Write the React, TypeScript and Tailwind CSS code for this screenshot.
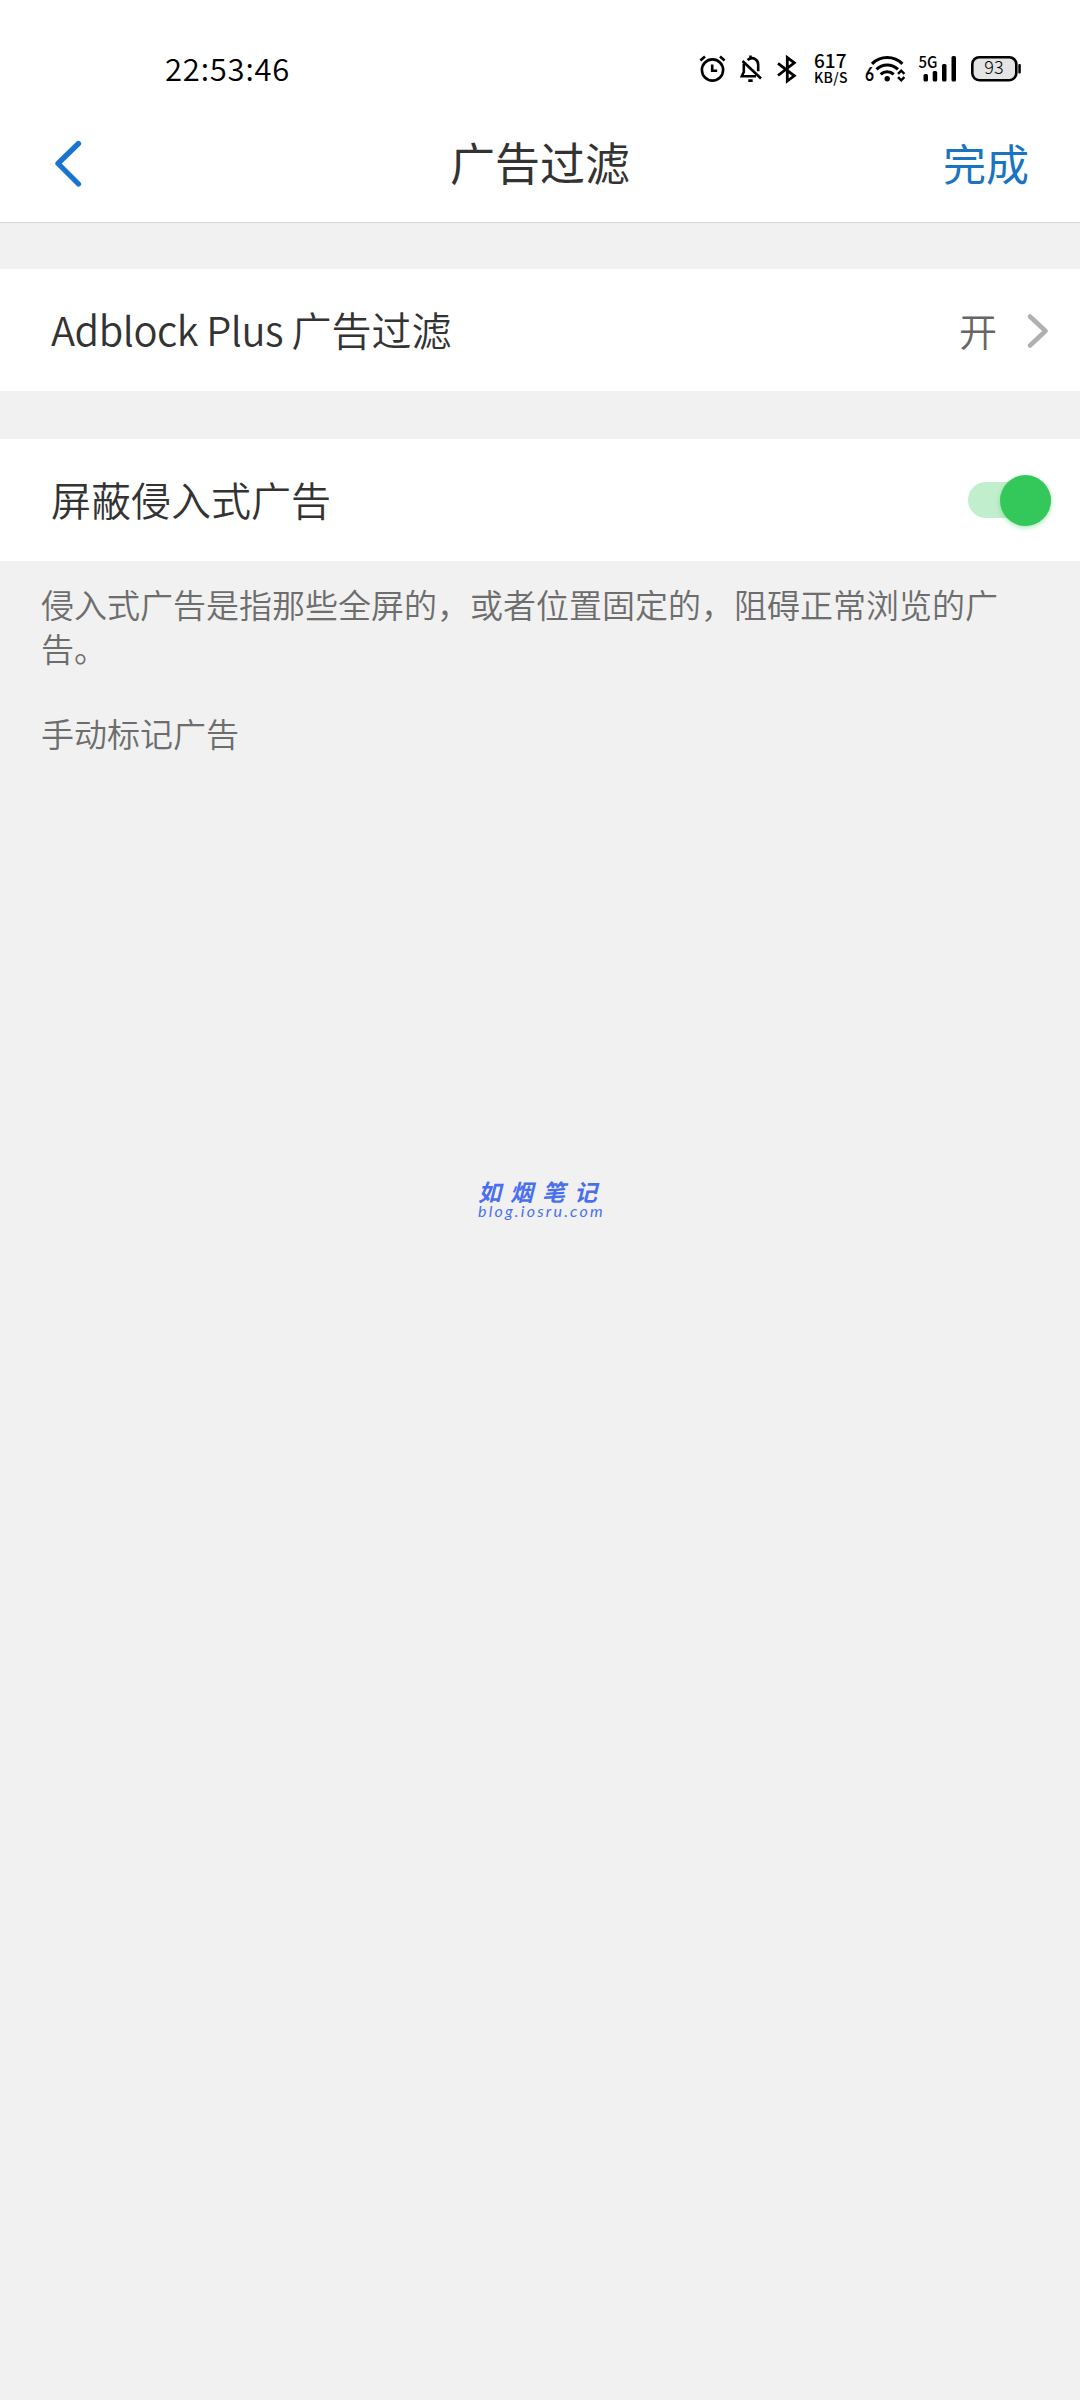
import type { ReactNode } from "react";

function StatusBar() {
  return (
    <div className="flex h-[106px] items-start pt-[53px] pl-[165px] text-black">
      <span className="-mt-px w-[533px] text-[31px] leading-8 font-[350] tracking-[0.8px] whitespace-nowrap">22:53:46</span>

      {/* alarm */}
      <svg className="h-8 w-[42px] shrink-0" viewBox="0 0 42 32" fill="none" stroke="currentColor" strokeWidth="2.6">
        <circle cx="14.5" cy="17" r="10.6" />
        <path d="M14.2 11.5v6.3h5M2.4 7.4l4.6-4M22 3.4l4.6 4" />
      </svg>

      {/* muted bell */}
      <svg className="h-8 w-[36px] shrink-0" viewBox="0 0 36 32" fill="none" stroke="currentColor" strokeWidth="2.6">
        <path d="M2.5 8l18.500 17.500" />
        <path d="M7.500 7c5.200-4.200 10.700-.6 10.700 4.800v6.400M3.800 10.500v8.500L1.800 23.300h14.200" />
        <path d="M8.300 27.600h4.400M10.500 2.500v3" />
      </svg>

      {/* bluetooth */}
      <svg className="h-8 w-[38px] shrink-0" viewBox="0 0 38 32" fill="none" stroke="currentColor" strokeWidth="2.8">
        <path d="M2 10.400l16.300 12.400-7 5.200V4.500l7 5.300L2 22.500" />
      </svg>

      <div className="-mt-[2px] flex w-[51px] shrink-0 flex-col font-medium">
        <span className="text-[19px] leading-[18px]">617</span>
        <span className="text-[14px] leading-4 tracking-[0.3px]">KB/S</span>
      </div>

      {/* wifi 6 */}
      <svg className="h-8 w-[53px] shrink-0 overflow-visible" viewBox="0 0 53 32" fill="none" stroke="currentColor" strokeWidth="3.2">
        <path d="M7 10.800a21.500 21.500 0 0 1 30.400 0M11.500 16.300a15.500 15.500 0 0 1 21.400 0M15.700 21.300a9.500 9.500 0 0 1 13 0" />
        <circle cx="22.200" cy="25.800" r="2.700" fill="currentColor" stroke="none" />
        <path d="M33 20.800l3.200-3.200 3.200 3.200M33 24.200l3.200 3.200 3.200-3.200" strokeWidth="2.400" />
        <text x="0" y="28.300" className="font-[Lato] text-[19px] font-bold" textLength="9" lengthAdjust="spacingAndGlyphs" fill="currentColor" stroke="none">6</text>
      </svg>

      {/* 5G signal */}
      <svg className="h-8 w-[53px] shrink-0 overflow-visible" viewBox="0 0 53 32" fill="currentColor">
        <text x="0.500" y="15" className="text-[16px] font-medium" textLength="19" lengthAdjust="spacingAndGlyphs">5G</text>
        <rect x="5.500" y="21" width="4.500" height="7.500" rx="1.500" />
        <rect x="14.700" y="18" width="4.500" height="10.500" rx="1.500" />
        <rect x="24" y="11" width="4.500" height="17.500" rx="1.500" />
        <rect x="33.500" y="3" width="4.500" height="25.500" rx="1.500" />
      </svg>

      {/* battery */}
      <svg className="h-8 w-[52px] shrink-0" viewBox="0 0 52 32">
        <rect x="1.300" y="4.200" width="44" height="23" rx="7" fill="#e4e4e4" stroke="currentColor" strokeWidth="2.600" />
        <rect x="47.300" y="11" width="2.500" height="9.500" rx="1" />
        <text x="23" y="21" textAnchor="middle" className="text-[18px] font-light">93</text>
      </svg>
    </div>
  );
}

function Header() {
  return (
    <div className="grid h-[117px] grid-cols-3 items-center border-b border-[#d6d6d6] px-[51px]">
      <svg className="ml-[3px] h-12 w-7" viewBox="0 0 28 48" fill="none" stroke="#1874d0" strokeWidth="5.300" strokeLinecap="round" strokeLinejoin="round">
        <path d="M24.500 3.500L4 23.500l20.500 20.500" />
      </svg>
      <h1 className="pb-[5px] text-center text-[45px] leading-none text-[#333]">广告过滤</h1>
      <button className="pb-[4px] text-right text-[43px] leading-none text-[#1a74bf]">完成</button>
    </div>
  );
}

function Row({ label, children }: { label: ReactNode; children: ReactNode }) {
  return (
    <div className="flex h-[122px] items-center justify-between bg-white pl-[51px] text-[40px] leading-none font-[350] text-[#333]">
      <span className="pb-[2px]">{label}</span>
      {children}
    </div>
  );
}

function Switch() {
  return (
    <div className="mr-[29px] flex h-9 w-[83px] items-center justify-end rounded-full bg-[#c1efcd]">
      <div className="size-[51px] shrink-0 rounded-full bg-[#34c759] shadow-[0_2px_5px_rgba(52,199,89,0.4)]" />
    </div>
  );
}

export default function App() {
  return (
    <div className="relative h-[2400px] w-[1080px] overflow-hidden bg-[#f1f1f1] font-['Noto_Sans_CJK_SC',sans-serif]">
      <div className="bg-white">
        <StatusBar />
        <Header />
      </div>

      <div className="mt-[46px]">
        <Row label={<><span className="tracking-[-0.5px]">Adblock Plus </span>广告过滤</>}>
          <div className="flex items-center pt-px pr-[31px]">
            <span className="pb-[2px] text-[38px] text-[#666]">开</span>
            <svg className="ml-[30px] h-9 w-[22px]" viewBox="0 0 22 36" fill="none" stroke="#b0b0b0" strokeWidth="4.500" strokeLinecap="round" strokeLinejoin="round">
              <path d="M3 3.500L18.500 18 3 32.500" />
            </svg>
          </div>
        </Row>
      </div>

      <div className="mt-12">
        <Row label="屏蔽侵入式广告">
          <Switch />
        </Row>
      </div>

      <div className="pt-[21px] pr-[60px] pl-[41px] text-[33px] leading-[44px] font-[350] text-[#6d6d6d]">
        <p>侵入式广告是指那些全屏的，或者位置固定的，阻碍正常浏览的广告。</p>
        <p className="mt-[41px]">手动标记广告</p>
      </div>

      {/* watermark floating over the page */}
      <div className="absolute top-[1179px] left-[478px] whitespace-nowrap text-[#4a6fee] italic">
        <div className="text-[23px] leading-6 font-bold tracking-[9px]">如烟笔记</div>
        <div className="font-[Lato] text-[16px] leading-4 tracking-[2.200px]">blog.iosru.com</div>
      </div>
    </div>
  );
}
